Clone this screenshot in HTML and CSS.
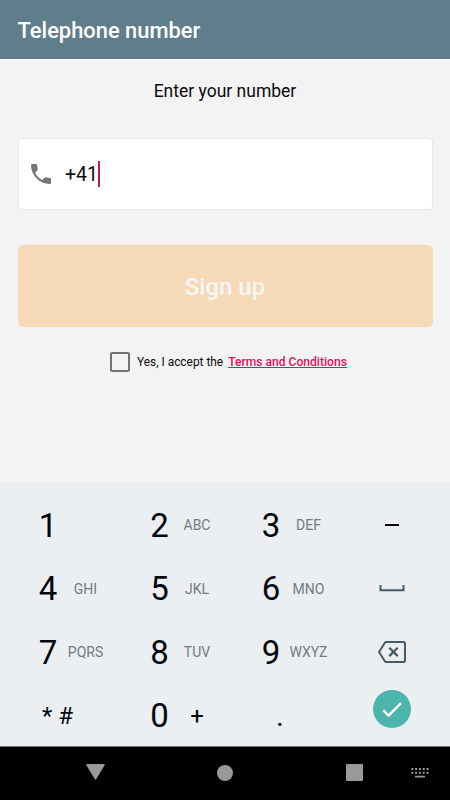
FILE: index.html
```html
<!DOCTYPE html>
<html lang="en">
<head>
<meta charset="utf-8">
<title>Telephone number</title>
<link rel="stylesheet" href="styles.css">
</head>
<body>
<header class="appbar"><h1 class="appbar-title">Telephone number</h1></header>
<main class="content">
  <p class="prompt">Enter your number</p>
  <div class="field">
    <svg class="phone" viewBox="3 3 18 18"><path d="M6.62 10.79c1.44 2.83 3.76 5.14 6.59 6.59l2.2-2.2c.27-.27.67-.36 1.02-.24 1.12.37 2.33.57 3.57.57.55 0 1 .45 1 1V20c0 .55-.45 1-1 1-9.39 0-17-7.61-17-17 0-.55.45-1 1-1h3.5c.55 0 1 .45 1 1 0 1.25.2 2.45.57 3.57.11.35.03.74-.25 1.02l-2.2 2.2z"/></svg>
    <span class="value">+41</span><span class="caret"></span>
  </div>
  <button class="signup">Sign up</button>
  <label class="terms"><span class="box"></span><span class="accept">Yes, I accept the</span><a class="link">Terms and Conditions</a></label>
</main>
<section class="keypad">
  <div class="key"><span class="digit">1</span></div>
  <div class="key"><span class="digit">2</span><span class="letters">ABC</span></div>
  <div class="key"><span class="digit">3</span><span class="letters">DEF</span></div>
  <div class="key action"><svg width="14" height="2"><path d="M0 0h14v2H0z"/></svg></div>
  <div class="key"><span class="digit">4</span><span class="letters">GHI</span></div>
  <div class="key"><span class="digit">5</span><span class="letters">JKL</span></div>
  <div class="key"><span class="digit">6</span><span class="letters">MNO</span></div>
  <div class="key action space"><svg class="line" width="26" height="8"><path d="M1.500 1v5.200h23V1"/></svg></div>
  <div class="key"><span class="digit">7</span><span class="letters">PQRS</span></div>
  <div class="key"><span class="digit">8</span><span class="letters">TUV</span></div>
  <div class="key"><span class="digit">9</span><span class="letters">WXYZ</span></div>
  <div class="key action"><svg class="line" width="28" height="22"><path d="M8.200 1H25.500q1.500 0 1.500 1.500v17q0 1.500-1.500 1.500H8.200q-.8 0-1.300-.8L1 11l5.900-9.200q.5-.8 1.300-.8z"/><path class="cross" d="M11.300 6.700l8.400 8.400m0-8.400l-8.400 8.400"/></svg></div>
  <div class="key symbols"><span>*</span><span>#</span></div>
  <div class="key"><span class="digit">0</span><span class="letters plus">+</span></div>
  <div class="key dot">.</div>
  <div class="key action done"><svg width="38" height="38" viewBox="0 0 38 38"><circle cx="19" cy="19" r="19"/><path d="M10.300 20.300l5.300 5.300L28 13.200"/></svg></div>
</section>
<nav class="navbar">
  <svg class="back" width="19" height="16"><path d="M1 0h17q1 .2.600 1.200L10.300 15q-.8 1.200-1.600 0L.4 1.200Q0 .2 1 0z"/></svg>
  <svg class="home" width="16" height="16"><circle cx="8" cy="8" r="8"/></svg>
  <svg class="recent" width="17" height="17"><rect width="17" height="17" rx="1"/></svg>
  <svg class="ime" width="18" height="10"><path d="M.3 0h2v2h-2zM4.100 0h2v2h-2zM7.900 0h2v2h-2zM11.700 0h2v2h-2zM15.500 0h2v2h-2zM.3 3.700h2v2h-2zM4.100 3.700h2v2h-2zM7.900 3.700h2v2h-2zM11.700 3.700h2v2h-2zM15.500 3.700h2v2h-2zM4 7.700h10v1.800H4z"/></svg>
</nav>
</body>
</html>
```
FILE: styles.css
```css
* { box-sizing: border-box; }
body {
  margin: 0;
  width: 450px;
  height: 800px;
  display: flex;
  flex-direction: column;
  overflow: hidden;
  background: #f3f3f3;
  color: #0b0b0b;
  font-family: Roboto, "Liberation Sans", sans-serif;
}
svg { display: block; flex: none; }
.appbar {
  height: 59.300px;
  padding: 1px 0 0 17.500px;
  display: flex;
  align-items: center;
  background: #607d8b;
}
.appbar-title { margin: 0; font-size: 21.900px; font-weight: 500; color: #fff; }
.content {
  height: 425px;
  padding: 0 17.500px;
  display: flex;
  flex-direction: column;
}
.prompt {
  margin: 21px 0 0;
  height: 22px;
  line-height: 22px;
  font-size: 17.500px;
  text-align: center;
}
.field {
  margin-top: 36px;
  height: 71.500px;
  padding-left: 12.500px;
  display: flex;
  align-items: center;
  background: #fff;
  border: 1.500px solid #e8e8e8;
  border-radius: 4px;
}
.phone { width: 20px; height: 20px; fill: #757575; }
.value { margin: 2px 0 0 14px; font-size: 19.500px; line-height: 24px; }
.caret { width: 2px; height: 26px; background: #c91850; }
.signup {
  margin-top: 35px;
  height: 82px;
  padding: 2px 0 0;
  border: 0;
  border-radius: 5px;
  background: #f6d9b7;
  color: #f5f5f5;
  font: 500 24px Roboto, "Liberation Sans", sans-serif;
}
.terms {
  margin: 25px 0 0 92px;
  height: 20px;
  display: flex;
  align-items: center;
  font-size: 11.900px;
}
.box { width: 20px; height: 20px; border: 2px solid #727272; border-radius: 2px; }
.accept { margin-left: 7.500px; padding-top: 1px; }
.link { margin-left: 5px; padding-top: 1px; font-size: 12.100px; font-weight: 500; color: #d8135c; text-decoration: underline; }
.keypad {
  height: 262px;
  padding: 9px 11px 0;
  display: grid;
  grid-template-columns: repeat(3, 111.500px) 93px;
  grid-template-rows: repeat(4, 63.500px);
  background: #ebeff2;
  box-shadow: 0 -1px 2px rgba(0, 0, 0, .06);
  color: #02080f;
}
.key { display: flex; align-items: center; padding-left: 22px; }
.digit { width: 30px; font-size: 33px; text-align: center; }
.letters { width: 45px; font-size: 14px; text-align: center; color: #717c80; }
.plus { font-size: 24px; color: #02080f; }
.action { padding: 0; justify-content: center; }
.line { fill: none; stroke: #455a64; stroke-width: 2; }
.cross { stroke-width: 2.200; }
.space { padding-bottom: 2px; }
.symbols { gap: 6px; padding-left: 31px; font-size: 24px; }
.dot { padding-left: 42px; font-size: 30px; }
.done { padding-bottom: 13px; }
.done circle { fill: #4db6ac; }
.done path { fill: none; stroke: #fff; stroke-width: 2.400; }
.navbar {
  flex: 1;
  display: flex;
  align-items: center;
  background: #000;
  border-top: 1px solid #777;
  padding: 0 0 2px 86px;
}
.navbar svg { fill: #999; }
.back { margin-bottom: 2px; }
.home { margin-left: 112px; }
.recent { margin-left: 113px; }
.ime { margin-left: 48px; }
```
